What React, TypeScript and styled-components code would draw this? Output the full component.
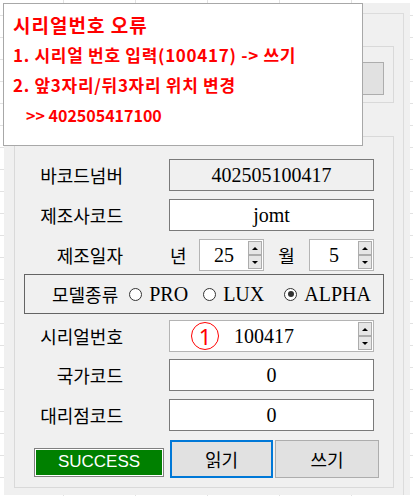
import React from "react"
import styled, { createGlobalStyle } from "styled-components"

const GlobalStyle = createGlobalStyle`
  html, body {
    margin: 0;
    padding: 0;
  }
  body {
    width: 413px;
    height: 496px;
    overflow: hidden;
    background-color: #fff;
    background-image:
      linear-gradient(to right, #e2e2e2 1px, transparent 1px),
      linear-gradient(to bottom, #e2e2e2 1px, transparent 1px);
    background-size: 72px 22px;
    background-position: 63px 15px;
    font-family: "Noto Sans CJK KR", "Noto Sans", sans-serif;
  }
`

const Page = styled.div`
  position: relative;
  width: 413px;
  height: 496px;
  padding-top: 3px;
  box-sizing: border-box;
`

const Window = styled.div`
  margin-left: 4px;
  width: 406px;
  height: 492px;
  background: #f0f0f0;
  overflow: hidden;
`

const OuterFrame = styled.div`
  margin-top: 10px;
  width: 400px;
  height: 482px;
  border-top: 1px solid #dcdcdc;
  border-right: 1px solid #dcdcdc;
  box-sizing: border-box;
  padding: 32px 0 0 10px;
`

const TopFrame = styled.div`
  width: 380px;
  height: 57px;
  box-sizing: border-box;
  border: 1px solid #d9d9d9;
  display: flex;
  justify-content: flex-end;
  padding: 15px 9px 0 0;
`

const GrayButton = styled.div`
  width: 180px;
  height: 33px;
  box-sizing: border-box;
  background: #e1e1e1;
  border: 1px solid #adadad;
`

const GroupBox = styled.div`
  position: relative;
  margin-top: 33px;
  width: 380px;
  height: 352px;
  box-sizing: border-box;
  border: 1px solid #d9d9d9;
  padding-top: 22px;
`

const Caption = styled.span`
  position: absolute;
  top: -12px;
  left: 22px;
  padding: 0 2px;
  background: #f0f0f0;
  font-size: 18px;
  line-height: 20px;
  color: #000;
`

const Row = styled.div<{ $mt?: number }>`
  display: flex;
  align-items: center;
  height: 32px;
  margin-top: ${(p) => p.$mt ?? 0}px;
`

const Label = styled.div`
  width: 108px;
  margin-right: 46px;
  text-align: right;
  font-size: 18px;
  color: #000;
  white-space: nowrap;
`

const TextBox = styled.div<{ $readOnly?: boolean }>`
  width: 205px;
  height: 32px;
  box-sizing: border-box;
  border: 1px solid #7a7a7a;
  background: ${(p) => (p.$readOnly ? "#f0f0f0" : "#fff")};
  display: flex;
  align-items: center;
  justify-content: center;
  font-family: "Liberation Serif", serif;
  font-size: 20px;
  color: #000;
`

const DateField = styled.div`
  width: 205px;
  display: flex;
  align-items: center;
`

const Unit = styled.div<{ $w: number; $center?: boolean }>`
  width: ${(p) => p.$w}px;
  padding-left: ${(p) => (p.$center ? 0 : 1)}px;
  box-sizing: border-box;
  text-align: ${(p) => (p.$center ? "center" : "left")};
  font-size: 18px;
  color: #000;
`

const SpinBox = styled.div<{ $w: number }>`
  position: relative;
  width: ${(p) => p.$w}px;
  height: 32px;
  box-sizing: border-box;
  border: 1px solid #b4b4b4;
  background: #fff;
  display: flex;
`

const SpinValue = styled.div`
  flex: 1;
  display: flex;
  align-items: center;
  justify-content: center;
  font-family: "Liberation Serif", serif;
  font-size: 20px;
  color: #000;
`

const SpinCol = styled.div`
  width: 14px;
  margin: 1px 1px 1px 0;
  display: flex;
  flex-direction: column;
`

const SpinBtn = styled.div<{ $down?: boolean }>`
  flex: 1;
  box-sizing: border-box;
  background: #e6e6e6;
  border: 1px solid #acacac;
  display: flex;
  align-items: center;
  justify-content: center;

  &::after {
    content: "";
    width: 0;
    height: 0;
    border-left: 3px solid transparent;
    border-right: 3px solid transparent;
    ${(p) =>
      p.$down ? "border-top: 3px solid #000;" : "border-bottom: 3px solid #000;"}
  }
`

const Marker = styled.span`
  position: absolute;
  left: 21px;
  top: 1px;
  width: 28px;
  height: 28px;
  box-sizing: border-box;
  border: 1.5px solid #ff0000;
  border-radius: 50%;
  display: flex;
  align-items: center;
  justify-content: center;
  font-family: "Noto Sans", sans-serif;
  font-size: 22px;
  line-height: 1;
  color: #ff0000;
`

const ModelFrame = styled.div`
  margin: 3px 0 0 9px;
  width: 360px;
  height: 40px;
  box-sizing: border-box;
  border: 1px solid #646464;
  display: flex;
  align-items: center;
  padding-left: 27px;
`

const ModelLabel = styled.span`
  font-size: 18px;
  color: #000;
  white-space: nowrap;
`

const RadioItem = styled.label<{ $ml: number }>`
  display: flex;
  align-items: center;
  margin-left: ${(p) => p.$ml}px;
  font-family: "Liberation Serif", serif;
  font-size: 20px;
  color: #000;
`

const RadioDot = styled.span<{ $checked?: boolean }>`
  position: relative;
  width: 13px;
  height: 13px;
  box-sizing: border-box;
  border: 1px solid #333;
  border-radius: 50%;
  background: #fff;
  margin-right: 7px;

  &::after {
    content: "";
    display: ${(p) => (p.$checked ? "block" : "none")};
    position: absolute;
    left: 2.5px;
    top: 2.5px;
    width: 6px;
    height: 6px;
    border-radius: 50%;
    background: #333;
  }
`

const ButtonRow = styled.div`
  display: flex;
  align-items: center;
  height: 38px;
  margin-top: 9px;
`

const Status = styled.div`
  margin: 6px 0 0 19px;
  width: 130px;
  height: 29px;
  box-sizing: border-box;
  border: 1px solid #808080;
  box-shadow: inset 0 0 0 1px #fff;
  background: #008000;
  display: flex;
  align-items: center;
  justify-content: center;
  font-family: "Liberation Sans", Arial, sans-serif;
  font-size: 17px;
  color: #fff;
`

const ActionButton = styled.button<{ $focused?: boolean; $ml: number; $w: number }>`
  margin-left: ${(p) => p.$ml}px;
  width: ${(p) => p.$w}px;
  height: 38px;
  box-sizing: border-box;
  background: #e1e1e1;
  border: ${(p) => (p.$focused ? "2px solid #0078d7" : "1px solid #adadad")};
  padding: 0;
  font-family: "Noto Sans CJK KR", sans-serif;
  font-size: 18px;
  color: #000;
`

const Tooltip = styled.div`
  position: absolute;
  left: 3px;
  top: 3px;
  width: 360px;
  height: 143px;
  box-sizing: border-box;
  border: 1px solid #a8a8a8;
  background: #fff;
  padding: 6px 0 0 9px;
  color: #ff0000;
  font-weight: 700;
`

const TipLine = styled.div<{ $size: number; $indent?: number; $spacing?: number }>`
  font-size: ${(p) => p.$size}px;
  line-height: 30px;
  letter-spacing: ${(p) => p.$spacing ?? 0}px;
  padding-left: ${(p) => p.$indent ?? 0}px;
  white-space: nowrap;
`

const Spin = ({ value, width }: { value: string; width: number }) => (
  <SpinBox $w={width}>
    <SpinValue>{value}</SpinValue>
    <SpinCol>
      <SpinBtn />
      <SpinBtn $down />
    </SpinCol>
  </SpinBox>
)

const App = () => {
  return (
    <>
      <GlobalStyle />
      <Page>
        <Window>
          <OuterFrame>
            <TopFrame>
              <GrayButton />
            </TopFrame>
            <GroupBox>
              <Caption>바코드 정보</Caption>
              <Row>
                <Label>바코드넘버</Label>
                <TextBox $readOnly>402505100417</TextBox>
              </Row>
              <Row $mt={8}>
                <Label>제조사코드</Label>
                <TextBox>jomt</TextBox>
              </Row>
              <Row $mt={8}>
                <Label>제조일자</Label>
                <DateField>
                  <Unit $w={30}>년</Unit>
                  <Spin value="25" width={65} />
                  <Unit $w={45} $center>
                    월
                  </Unit>
                  <Spin value="5" width={65} />
                </DateField>
              </Row>
              <ModelFrame>
                <ModelLabel>모델종류</ModelLabel>
                <RadioItem $ml={11}>
                  <RadioDot />
                  PRO
                </RadioItem>
                <RadioItem $ml={15}>
                  <RadioDot />
                  LUX
                </RadioItem>
                <RadioItem $ml={20}>
                  <RadioDot $checked />
                  ALPHA
                </RadioItem>
              </ModelFrame>
              <Row $mt={6}>
                <Label>시리얼번호</Label>
                <SpinBox $w={205}>
                  <Marker>1</Marker>
                  <SpinValue>100417</SpinValue>
                  <SpinCol>
                    <SpinBtn />
                    <SpinBtn $down />
                  </SpinCol>
                </SpinBox>
              </Row>
              <Row $mt={7}>
                <Label>국가코드</Label>
                <TextBox>0</TextBox>
              </Row>
              <Row $mt={8}>
                <Label>대리점코드</Label>
                <TextBox>0</TextBox>
              </Row>
              <ButtonRow>
                <Status>SUCCESS</Status>
                <ActionButton $focused $ml={6} $w={103}>
                  읽기
                </ActionButton>
                <ActionButton $ml={2} $w={104}>
                  쓰기
                </ActionButton>
              </ButtonRow>
            </GroupBox>
          </OuterFrame>
        </Window>
        <Tooltip>
          <TipLine $size={19} $spacing={1}>
            시리얼번호 오류
          </TipLine>
          <TipLine $size={17} $spacing={0.7}>
            1. 시리얼 번호 입력(100417) -&gt; 쓰기
          </TipLine>
          <TipLine $size={17} $spacing={0.7}>
            2. 앞3자리/뒤3자리 위치 변경
          </TipLine>
          <TipLine $size={16} $indent={13}>
            &gt;&gt; 402505417100
          </TipLine>
        </Tooltip>
      </Page>
    </>
  )
}

export default App
